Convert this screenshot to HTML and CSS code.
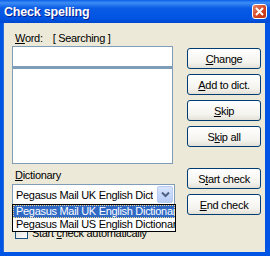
FILE: index.html
```html
<!DOCTYPE html>
<html>
<head>
  <meta charset="UTF-8">
  <title>Check spelling</title>
  <link rel="stylesheet" href="styles.css">
</head>
<body>
  <div class="window">
    <div class="titlebar">
      <span class="title">Check spelling</span>
      <span class="close">
        <svg width="11" height="11" viewBox="0 0 11 11">
          <path d="M2 2 L9 9 M9 2 L2 9" stroke="#fff" stroke-width="2" />
        </svg>
      </span>
    </div>
    <div class="client">
      <div class="cols">
        <div class="left">
          <div class="word_row"><span><u>W</u>ord:</span><span class="searching">[ Searching ]</span></div>
          <div class="word_input"></div>
          <div class="suggest_list"></div>
          <div class="dict_label"><u>D</u>ictionary</div>
          <div class="select">
            <span class="select_text">Pegasus Mail UK English Dict</span>
            <span class="select_btn">
              <svg width="9" height="7" viewBox="0 0 9 7">
                <path d="M1 1.5 L4.5 5 L8 1.5" stroke="#4D6185" stroke-width="2" fill="none" />
              </svg>
            </span>
            <div class="popup_list">
              <div class="item sel">Pegasus Mail UK English Dictionary</div>
              <div class="item">Pegasus Mail US English Dictionary</div>
            </div>
          </div>
          <div class="check_row">
            <span class="checkbox"></span>
            <span>Start <u>c</u>heck automatically</span>
          </div>
        </div>
        <div class="right">
          <div class="btn_group">
            <button><u>C</u>hange</button>
            <button><u>A</u>dd to dict.</button>
            <button><u>S</u>kip</button>
            <button>S<u>k</u>ip all</button>
          </div>
          <div class="btn_group lower">
            <button>S<u>t</u>art check</button>
            <button><u>E</u>nd check</button>
          </div>
        </div>
      </div>
    </div>
  </div>
</body>
</html>
```

FILE: styles.css
```css
body {
  margin: 0;
  font-family: "Liberation Sans", Arial, sans-serif;
  font-size: 11px;
  letter-spacing: -0.3px;
  color: #000;
}
.window {
  width: 270px;
  height: 256px;
  background: #0055E5;
  display: flex;
  flex-direction: column;
  box-sizing: border-box;
  padding: 0 5px 4px 3px;
}
.titlebar {
  height: 23px;
  margin: 0 -5px 0 -3px;
  padding: 0 3px 0 4px;
  display: flex;
  align-items: center;
  justify-content: space-between;
  background: linear-gradient(#0A5FE8 0%, #3D8DF5 12%, #0B5CE6 35%, #0054E3 80%, #0048CF 100%);
}
.title {
  color: #fff;
  font-weight: bold;
  font-size: 12.5px;
  letter-spacing: -0.2px;
  text-shadow: 1px 1px 0 #0A1E8C;
}
.close {
  width: 15px;
  height: 15px;
  box-sizing: border-box;
  border: 1px solid #fff;
  border-radius: 3px;
  background: linear-gradient(135deg, #E8876B, #D2411E 60%, #C03715);
  display: flex;
  align-items: center;
  justify-content: center;
}
.client {
  flex: 1;
  background: #ECE9D8;
  border-left: 1px solid #2E6BD9;
  padding: 7px 0 0 8px;
}
.cols {
  display: flex;
  gap: 14px;
}
.left {
  width: 161px;
  display: flex;
  flex-direction: column;
}
.word_row {
  display: flex;
  gap: 10px;
  padding-left: 3px;
  height: 16px;
  align-items: center;
}
.word_input {
  height: 19px;
  border: 1px solid #7F9DB9;
  background: #fff;
}
.suggest_list {
  height: 94px;
  border: 1px solid #7F9DB9;
  border-top-width: 2px;
  background: #fff;
}
.dict_label {
  margin-top: 5px;
  padding-left: 3px;
  height: 15px;
}
.select {
  position: relative;
  width: 163px;
  height: 21px;
  box-sizing: border-box;
  border: 1px solid #7F9DB9;
  background: #fff;
  display: flex;
  align-items: center;
  justify-content: space-between;
  padding: 1px 1px 1px 3px;
}
.select_text {
  white-space: nowrap;
  overflow: hidden;
}
.select_btn {
  flex: none;
  width: 16px;
  height: 17px;
  box-sizing: border-box;
  border: 1px solid #B9CBF3;
  border-radius: 2px;
  background: linear-gradient(#D9E5FD, #B6CBF6);
  display: flex;
  align-items: center;
  justify-content: center;
}
.popup_list {
  position: absolute;
  left: -1px;
  top: 19px;
  width: 164px;
  box-sizing: border-box;
  border: 1px solid #000;
  background: #fff;
  overflow: hidden;
  white-space: nowrap;
  z-index: 2;
}
.item {
  height: 13px;
  line-height: 13px;
  padding-left: 3px;
}
.item.sel {
  background: #316AC5;
  color: #fff;
  outline: 1px dotted #F5D78E;
  outline-offset: -1px;
}
.check_row {
  display: flex;
  align-items: center;
  gap: 4px;
  margin-top: 21px;
  padding-left: 3px;
  height: 13px;
}
.checkbox {
  width: 11px;
  height: 11px;
  border: 1px solid #1C5180;
  background: linear-gradient(135deg, #DCDCD7, #fff);
}
.right {
  width: 74px;
  display: flex;
  flex-direction: column;
  padding-top: 18px;
}
.btn_group {
  display: flex;
  flex-direction: column;
  gap: 5px;
}
.btn_group.lower {
  margin-top: 21px;
}
button {
  height: 21px;
  width: 74px;
  font-family: "Liberation Sans", Arial, sans-serif;
  font-size: 11px;
  letter-spacing: -0.3px;
  color: #000;
  border: 1px solid #003C74;
  border-radius: 3px;
  background: linear-gradient(#FFFFFF, #F4F3EE 70%, #E3E1D6);
  padding: 0;
}
```
